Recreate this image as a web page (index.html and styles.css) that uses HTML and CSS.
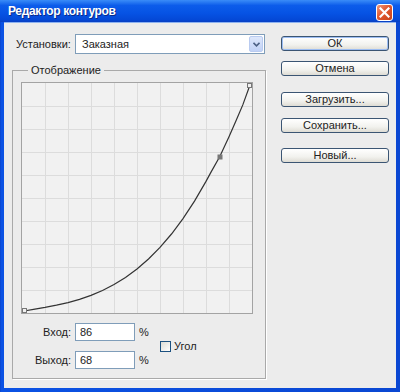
FILE: index.html
```
<!DOCTYPE html>
<html lang="ru">
<head>
    <meta charset="UTF-8">
    <title>Редактор контуров</title>
    <link rel="stylesheet" href="styles.css">
</head>
<body>
    <div class="window">
        <div class="titlebar">
            <span class="title">Редактор контуров</span>
            <button class="close-btn">
                <svg width="11" height="11" viewBox="0 0 11 11">
                    <path d="M1.5 1.5 L9.5 9.5 M9.5 1.5 L1.5 9.5" stroke="#fff" stroke-width="2.2" stroke-linecap="square"/>
                </svg>
            </button>
        </div>

        <div class="content">
            <div class="left-col">
                <div class="preset-row">
                    <label class="preset-label">Установки:</label>
                    <div class="select">
                        <span class="select-value">Заказная</span>
                        <span class="select-arrow">
                            <svg width="7" height="5" viewBox="0 0 7 5">
                                <path d="M0.5 0.8 L3.5 3.8 L6.5 0.8" fill="none" stroke="#4d6185" stroke-width="1.6"/>
                            </svg>
                        </span>
                    </div>
                </div>

                <fieldset class="group">
                    <legend>Отображение</legend>
                    <div class="graph">
                        <svg width="230" height="230" viewBox="0 0 230 230">
                            <g stroke="#dcdcdc" stroke-width="1">
                                <path d="M23.5 0V230M46.5 0V230M69.5 0V230M92.5 0V230M115.5 0V230M138.5 0V230M161.5 0V230M184.5 0V230M207.5 0V230"/>
                                <path d="M0 23.5H230M0 46.5H230M0 69.5H230M0 92.5H230M0 115.5H230M0 138.5H230M0 161.5H230M0 184.5H230M0 207.5H230"/>
                            </g>
                            <polyline fill="none" stroke="#333" stroke-width="1.2"
                                points="2,228 11.5,226.3 23,224.4 34.5,222.2 46,219.6 57.5,216.4 69,212.4 80.5,207.5 92,201.6 103.5,194.5 115,186 126.5,176 138,164.4 149.5,151 161,135.6 172.5,118.1 184,98.4 188.6,89.9 197.8,73.6 207,53.8 213.9,38.1 220.8,21.9 228,2"/>
                            <rect x="0.5" y="225.5" width="4" height="4" fill="#f1f1f1" stroke="#777"/>
                            <rect x="225.5" y="0.5" width="4" height="4" fill="#f1f1f1" stroke="#777"/>
                            <rect x="195.5" y="71.5" width="5" height="5" fill="#777"/>
                        </svg>
                    </div>

                    <div class="fields">
                        <label class="field-label">Вход:</label>
                        <input class="field-input" type="text" value="86">
                        <span class="percent">%</span>
                        <label class="corner">
                            <span class="checkbox"></span>
                            <span>Угол</span>
                        </label>
                        <label class="field-label">Выход:</label>
                        <input class="field-input" type="text" value="68">
                        <span class="percent">%</span>
                    </div>
                </fieldset>
            </div>

            <div class="buttons">
                <button class="btn btn-default">ОК</button>
                <button class="btn btn-cancel">Отмена</button>
                <button class="btn btn-load">Загрузить...</button>
                <button class="btn btn-save">Сохранить...</button>
                <button class="btn btn-new">Новый...</button>
            </div>
        </div>
    </div>
</body>
</html>
```

FILE: styles.css
```
* {
    box-sizing: border-box;
}

body {
    margin: 0;
    font-family: "Liberation Sans", Arial, sans-serif;
    font-size: 11px;
    color: #222;
}

.window {
    width: 400px;
    height: 392px;
    display: flex;
    flex-direction: column;
    padding: 0 4px 4px 4px;
    background: linear-gradient(90deg, #0a3fc4, #0b52e4 1px, #0b52e4 3px, #0a47d2);
}

.titlebar {
    height: 22px;
    margin: 0 -4px;
    padding: 0 7px 0 8px;
    display: flex;
    align-items: center;
    justify-content: space-between;
    background: linear-gradient(#3a8cf8, #0c5cea 25%, #0653e4 60%, #0448d6 90%, #0a3fc0);
}

.title {
    color: #fff;
    font-weight: bold;
    font-size: 12px;
    letter-spacing: -0.35px;
    text-shadow: 1px 1px 0 #0a2a8a;
}

.close-btn {
    width: 17px;
    height: 17px;
    margin-top: 2px;
    padding: 0;
    border: 1px solid #fff;
    border-radius: 3px;
    background: linear-gradient(135deg, #f09a7e, #e0582f 45%, #c8431c);
    display: flex;
    align-items: center;
    justify-content: center;
}

.content {
    flex: 1;
    display: flex;
    padding: 11px 0 0 8px;
    background-color: #ececec;
    border-top: 1px solid #8db2f0;
}

.left-col {
    width: 254px;
    display: flex;
    flex-direction: column;
}

.preset-row {
    display: flex;
    align-items: center;
    height: 20px;
    padding-left: 4px;
}

.preset-label {
    width: 59px;
}

.select {
    width: 190px;
    height: 20px;
    display: flex;
    align-items: center;
    justify-content: space-between;
    padding: 1px 1px 1px 6px;
    background-color: #fff;
    border: 1px solid #7f9db9;
}

.select-arrow {
    width: 14px;
    height: 16px;
    display: flex;
    align-items: center;
    justify-content: center;
    border-radius: 2px;
    background: linear-gradient(#dde7fb, #c1d2f6);
    border: 1px solid #b9cbf0;
}

.group {
    margin: 10px 0 0 0;
    padding: 5px 0 9px 8px;
    border: 1px solid #a9a9a9;
    box-shadow: 1px 1px 0 #fff;
}

.group legend {
    margin-left: 7px;
    padding: 0 3px;
    line-height: 13px;
}

.graph {
    width: 232px;
    height: 232px;
    border: 1px solid #a3a3a3;
    background-color: #f1f1f1;
}

.graph svg {
    display: block;
}

.fields {
    display: grid;
    grid-template-columns: 50px 60px 10px auto;
    justify-content: start;
    column-gap: 4px;
    row-gap: 10px;
    margin-top: 9px;
    align-items: center;
}

.field-label {
    text-align: right;
}

.field-input {
    width: 60px;
    height: 18px;
    padding: 0 4px;
    border: 1px solid #7f9db9;
    font-family: inherit;
    font-size: 11px;
    color: #222;
}

.corner {
    grid-row: 1 / span 2;
    grid-column: 4;
    display: flex;
    align-items: center;
    gap: 3px;
    margin-left: 7px;
}

.checkbox {
    width: 11px;
    height: 11px;
    border: 1px solid #1c5180;
    background: linear-gradient(135deg, #dcdcd5, #fff);
}

.buttons {
    width: 108px;
    margin-left: 15px;
    padding-top: 2px;
    display: flex;
    flex-direction: column;
}

.btn {
    height: 15px;
    padding: 0;
    border: 1px solid #3b5573;
    border-radius: 3px;
    background: linear-gradient(#ffffff, #f2f2ee 60%, #dedcd4);
    font-family: inherit;
    font-size: 11px;
    line-height: 13px;
    color: #222;
}

.btn-default {
    box-shadow: inset 0 0 0 1px #9dbdf2;
}

.btn-cancel {
    margin-top: 10px;
}

.btn-load {
    margin-top: 16px;
}

.btn-save {
    margin-top: 11px;
}

.btn-new {
    margin-top: 15px;
}
```
